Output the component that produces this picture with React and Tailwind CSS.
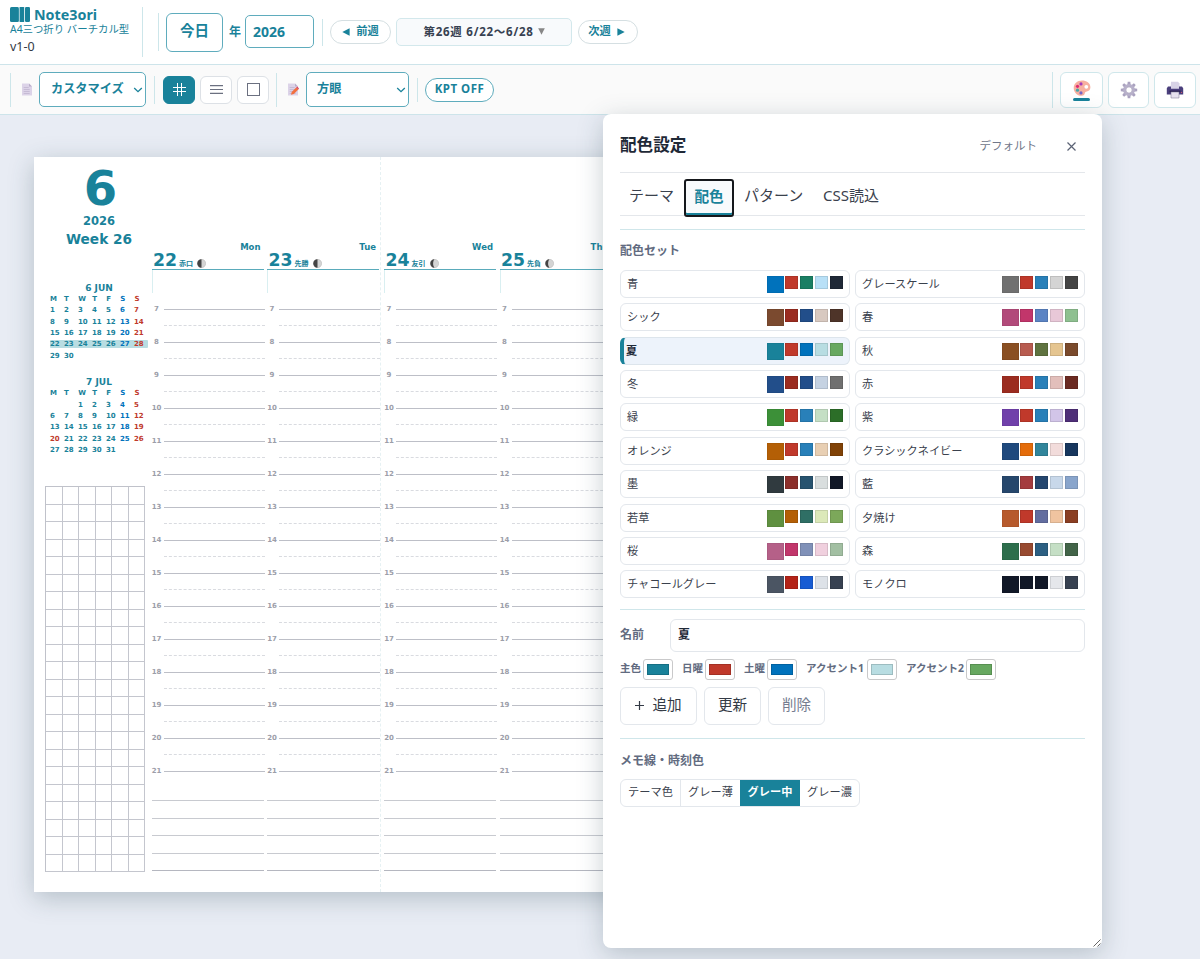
import React from "react";

const SETS = [
  ["青", "#0072bc", "#c0392b", "#1a7f64", "#b8e0f7", "#1f2937"],
  ["グレースケール", "#707070", "#c0392b", "#2980b9", "#d4d4d4", "#444444"],
  ["シック", "#7b4a2f", "#9b2c20", "#224e8a", "#d8c9c0", "#4e3429"],
  ["春", "#b24a7a", "#c2366b", "#5b84c4", "#e8c8d8", "#8ec090"],
  ["夏", "#19829a", "#c0392b", "#0072bc", "#b8dde2", "#67a860"],
  ["秋", "#8a4f22", "#b85c50", "#5f7340", "#e5c590", "#7a4a2c"],
  ["冬", "#224e8a", "#9b2c20", "#224e8a", "#c5d2e2", "#707070"],
  ["赤", "#9b2c20", "#c0392b", "#2980b9", "#e2bfbb", "#6b2a22"],
  ["緑", "#3c9038", "#c0392b", "#2980b9", "#c5dfc5", "#2c6e28"],
  ["紫", "#7040aa", "#c0392b", "#2980b9", "#d2c5e8", "#4e2e78"],
  ["オレンジ", "#b45f06", "#c0392b", "#2980b9", "#e8cfb3", "#804206"],
  ["クラシックネイビー", "#1f497d", "#e46c0a", "#31859b", "#f2dcdb", "#17365d"],
  ["墨", "#303a3f", "#8c2f2b", "#27536f", "#d9dede", "#111827"],
  ["藍", "#26476c", "#a43b3e", "#24466e", "#c8d8ea", "#89a5cc"],
  ["若草", "#5f9040", "#b45f06", "#2f6f65", "#dce9b9", "#7ca85a"],
  ["夕焼け", "#b75a2c", "#c0392b", "#626da0", "#f0c4a0", "#8a3e22"],
  ["桜", "#b56088", "#c2366b", "#8091b8", "#f0d0de", "#a2bfa2"],
  ["森", "#2d6e4c", "#984a30", "#2c5f82", "#c5dfc5", "#426448"],
  ["チャコールグレー", "#4b5563", "#b42318", "#175cd3", "#dde2e8", "#374151"],
  ["モノクロ", "#111827", "#111827", "#111827", "#e5e7eb", "#374151"],
];

const HOURS = [7, 8, 9, 10, 11, 12, 13, 14, 15, 16, 17, 18, 19, 20, 21];

function Divider({ className }) {
  return <div className={"w-px shrink-0 bg-[#cde6ea] " + className} />;
}

function Chevron({ className }) {
  return (
    <svg className={className} width="10" height="6" viewBox="0 0 10 6" fill="none" stroke="#19829a" strokeWidth="1.3">
      <path d="M1.2 1 5 4.7 8.8 1" />
    </svg>
  );
}

function PageIcon({ pencil }) {
  return (
    <svg width="12" height="13" viewBox="0 0 12 13">
      <path d="M1 .5h7L11 3.500v9H1z" fill="#dcd3e8" />
      <path d="M8 .5 11 3.500H8z" fill="#b9adc9" />
      <path d="M2.700 4.500h5M2.700 6.500h6M2.700 8.500h6M2.700 10.500h6" stroke="#c0b5cf" strokeWidth=".8" />
      {pencil && (
        <g>
          <path d="m4 11.700.7-2.800L9.200 4.500l2.100 2.100-4.500 4.400z" fill="#f2703f" />
          <path d="m9.200 4.500 1.100-.9 1.700 1.800-.7 1.200z" fill="#d9415f" />
        </g>
      )}
    </svg>
  );
}

function Header() {
  return (
    <header className="flex h-[65px] items-center border-b border-[#cde4ea] bg-white">
      <div className="ml-2.5 flex h-[50px] w-[133px] flex-col border-r border-[#cde6ea]">
        <div className="flex h-[15px] items-center">
          <svg width="20" height="15" viewBox="0 0 20 15" fill="#19829a">
            <rect x="0" y="0" width="9" height="15" rx="1.5" />
            <rect x="9.6" y="0" width="4.6" height="15" rx=".6" />
            <rect x="15" y="0" width="5" height="15" rx="1.2" />
            <path d="M8.900 0v15" stroke="#7fc0cc" strokeWidth=".4" />
          </svg>
          <span className="ml-[4px] text-[14.300px] leading-[13px] font-bold text-[#19829a]">Note3ori</span>
        </div>
        <div className="h-[15px] text-[10.400px] leading-[15px] whitespace-nowrap text-[#19829a]">A4三つ折り バーチカル型</div>
        <div className="mt-0.5 text-[12.500px] leading-[16px] text-[#333a45]">v1-0</div>
      </div>
      <Divider className="ml-[15px] h-[38px]" />
      <div className="ml-[7px] flex h-[39px] w-[57px] items-center justify-center rounded-md border border-[#5facbd] pb-[2px] text-[14.500px] font-bold text-[#19829a]">今日</div>
      <div className="ml-[6px] w-3 text-[12px] font-bold text-[#19829a]">年</div>
      <div className="-mt-px ml-1 flex h-[33px] w-[69px] items-center rounded-[5px] border border-[#5facbd] pl-[7px] text-[14px] font-bold text-[#19829a]">2026</div>
      <Divider className="ml-2 h-[27px]" />
      <div className="ml-[7px] flex h-6 w-[61px] items-center justify-center gap-[6px] rounded-full border border-[#d5dfe2] pb-px text-[11.300px] font-bold text-[#19829a]">
        <svg width="8" height="8" viewBox="0 0 8 8"><path d="M7.600.2v7.600L.3 4z" fill="#19829a" /></svg>
        前週
      </div>
      <div className="ml-[5px] flex h-7 w-[176px] items-center justify-center gap-1 rounded-[5px] border border-[#d3e8ec] bg-[#f8fafc] pb-px text-[11.500px] font-bold tracking-[0.750px] whitespace-nowrap text-[#374151]">
        第26週 6/22〜6/28
        <svg width="7" height="7" viewBox="0 0 7 7"><path d="M.2.3h6.600L3.500 6.800z" fill="#878787" /></svg>
      </div>
      <div className="ml-1.5 flex h-6 w-[60px] items-center justify-center gap-[6px] rounded-full border border-[#d5dfe2] pr-[3px] pb-px text-[11.300px] font-bold text-[#19829a]">
        次週
        <svg width="8" height="8" viewBox="0 0 8 8"><path d="M.4.2v7.600L7.700 4z" fill="#19829a" /></svg>
      </div>
    </header>
  );
}

function PaletteIcon() {
  return (
    <svg width="18" height="17" viewBox="0 0 18 17">
      <path fillRule="evenodd" d="M9 .5C4 .5.7 3.800.7 8s3.400 7.800 7.700 7.800c2.600 0 3.200-1.500 3.400-2.600.3-1.200 1-1.500 2-1.700 2-.3 3.600-1.800 3.600-4.300C17.400 2.900 13.400.5 9 .5zM13.300 4.900a1.900 1.900 0 1 1 0 3.800 1.900 1.900 0 1 1 0-3.800z" fill="#f7b0a0" />
      <circle cx="8" cy="3.900" r="1.600" fill="#a33bc0" />
      <circle cx="4.500" cy="6.300" r="1.600" fill="#df2c72" />
      <circle cx="4.500" cy="10.200" r="1.600" fill="#4aa6a8" />
      <circle cx="8" cy="12.900" r="1.600" fill="#7565c9" />
    </svg>
  );
}

function GearIcon() {
  return (
    <svg width="18" height="18" viewBox="0 0 18 18">
      <g fill="#aaa2bf">
        {[0, 45, 90, 135, 180, 225, 270, 315].map((a) => (
          <path key={a} d="M7.300 4 7.700.8h2.600l.4 3.200z" transform={`rotate(${a} 9 9)`} />
        ))}
      </g>
      <circle cx="9" cy="9" r="4.600" fill="none" stroke="#b7b0ca" strokeWidth="2.600" />
      <circle cx="9" cy="9" r="3.200" fill="none" stroke="#9b92b0" strokeWidth=".7" />
    </svg>
  );
}

function PrinterIcon() {
  return (
    <svg width="18" height="18" viewBox="0 0 18 18">
      <path d="M5 .8h7L13.500 2.500V8h-9z" fill="#d7d2e6" />
      <path d="M2 5.500h3v2.300h8V5.500h3l1.200 1.800v6.200h-16.400V7.300z" fill="#4a3f7c" />
      <path d="M3.500 9.500h11v1.800h-11z" fill="#2b2354" />
      <path d="M5 11h8v6H5z" fill="#e6e2ef" stroke="#77708f" strokeWidth=".5" />
      <circle cx="15.500" cy="11.500" r=".6" fill="#e3566c" />
    </svg>
  );
}

function Toolbar() {
  const tool = "flex h-[28px] w-8 items-center justify-center rounded-md border ";
  const right = "flex h-9 items-center justify-center rounded-md border border-[#cfe7eb] bg-white ";
  return (
    <div className="flex h-[50px] items-center border-b border-[#cde4ea] bg-[#fafafa]">
      <Divider className="ml-2.5 h-[34px]" />
      <div className="ml-[10px]"><PageIcon /></div>
      <div className="ml-[6px] flex h-[35px] w-[107px] items-center rounded-[5px] border border-[#5facbd] bg-white pl-[11px] pb-px text-[12.200px] font-bold whitespace-nowrap text-[#19829a]">
        <span className="w-[82px]">カスタマイズ</span>
        <Chevron className="mt-[2px] shrink-0" />
      </div>
      <Divider className="ml-2 h-7" />
      <div className={tool + "ml-[8px] border-[#19829a] bg-[#19829a]"}>
        <svg width="13" height="13" viewBox="0 0 13 13" stroke="#fff" strokeWidth="1"><path d="M4.500 0v13M8.500 0v13M0 4.500h13M0 8.500h13" /></svg>
      </div>
      <div className={tool + "ml-[5px] border-[#dde1e6] bg-white"}>
        <svg width="13" height="9" viewBox="0 0 13 9" stroke="#6b7080" strokeWidth="1.200"><path d="M0 .6h13M0 4.500h13M0 8.400h13" /></svg>
      </div>
      <div className={tool + "ml-[5px] border-[#dde1e6] bg-white"}>
        <div className="size-[13px] border-[1.500px] border-[#6b7080]" />
      </div>
      <Divider className="ml-[7px] h-[34px]" />
      <div className="ml-2.5"><PageIcon pencil /></div>
      <div className="ml-[7px] flex h-[35px] w-[103px] items-center rounded-[5px] border border-[#5facbd] bg-white pl-2.5 pb-px text-[12.200px] font-bold text-[#19829a]">
        <span className="w-[79px]">方眼</span>
        <Chevron className="mt-[2px] shrink-0" />
      </div>
      <Divider className="ml-2 h-6" />
      <div className="ml-[7px] flex h-6 w-[69px] items-center justify-center rounded-full border border-[#5facbd] bg-white pb-[2px] text-[11.500px] font-bold tracking-[0.500px] text-[#19829a]">KPT OFF</div>
      <Divider className="ml-auto h-9" />
      <div className={right + "ml-[7px] w-[43px] flex-col pt-[2px]"}>
        <PaletteIcon />
        <div className="mt-[1px] h-[3px] w-[17px] rounded-full bg-[#19829a]" />
      </div>
      <div className={right + "ml-[5px] w-[41px]"}><GearIcon /></div>
      <div className={right + "mr-[4px] ml-[5px] w-[42px]"}><PrinterIcon /></div>
    </div>
  );
}

function MiniMonth({ title, start, days, holiday, current, className }) {
  const rows = [];
  for (let d = 1 - start; d <= days; d += 7) rows.push([0, 1, 2, 3, 4, 5, 6].map((i) => d + i));
  const tone = (i, red) => (i === 6 || red ? "text-[#c0392b]" : i === 5 ? "text-[#0072bc]" : "text-[#19829a]");
  return (
    <div className={"w-[106px] font-['DejaVu_Sans'] text-[7px] font-bold " + className}>
      <div className="pr-px text-center text-[9px] leading-[12px] text-[#19829a]">{title}</div>
      <div className="grid h-[11.300px] grid-cols-7 items-center pl-[3.500px] pr-1">
        {"MTWTFSS".split("").map((c, i) => <span key={i} className={tone(i)}>{c}</span>)}
      </div>
      {rows.map((r) => (
        <div key={r[0]} className="flex h-[11.300px] items-center pl-[3px] pr-[4.500px]">
          <div className={"grid h-2 w-full grid-cols-7 items-center pl-[.5px] leading-2 " + (r[0] === current ? "rounded-[1px] bg-[#b8dde2]" : "")}>
            {r.map((d, i) => <span key={i} className={tone(i, d === holiday)}>{d > 0 && d <= days ? d : ""}</span>)}
          </div>
        </div>
      ))}
    </div>
  );
}

function Moon({ lit }) {
  return (
    <svg width="9" height="9" viewBox="0 0 9 9">
      <circle cx="4.500" cy="4.500" r="4.200" fill="#d4d4d4" stroke="#aaa" strokeWidth=".4" />
      <path d={lit ? "M4.500.3a4.200 4.200 0 0 0 0 8.400C2.700 7 2.700 2 4.500.3z" : "M4.500.3a4.200 4.200 0 0 0 0 8.400z"} fill="#444" />
    </svg>
  );
}

function Day({ num, name, rokuyo, lit, className }) {
  return (
    <div className={"w-[112px] shrink-0 " + className}>
      <div className="flex h-[112.500px] flex-col justify-end border-b border-[#5aabbb] text-[#19829a]">
        <div className="pr-[3px] text-right font-['DejaVu_Sans'] text-[8.500px] leading-[10px] font-bold">{name}</div>
        <div className="flex h-[17px] items-center pl-[1.500px]">
          <span className="font-['DejaVu_Sans'] text-[17.300px] leading-[17px] font-bold">{num}</span>
          <span className="mt-[7px] ml-[2px] text-[7px] leading-[8px] font-bold">{rokuyo}</span>
          <span className="mt-[6px] ml-[4px]"><Moon lit={lit} /></span>
        </div>
      </div>
      <div className="h-[23px] border-l border-[#d9eff1]" />
      <div className="w-[113px]">
        {HOURS.map((h) => (
          <div key={h} className="flex h-[33px]">
            <div className="flex h-[33px] w-[10px] items-center justify-center font-['DejaVu_Sans'] text-[7px] font-bold text-[#9c9ea9]">{h}</div>
            <div className="ml-[2px] flex-1">
              <div className="h-[17px] border-b border-[#bdbfc7]" />
              {h < 21 && <div className="h-[16.500px] border-b border-dashed border-[#d9dbe0]" />}
            </div>
          </div>
        ))}
      </div>
      <div className="mt-[-4px]">
        {[0, 1, 2, 3, 4].map((i) => (
          <div key={i} className={"h-[17.500px] border-b " + (i === 4 ? "border-[#b5b7c0]" : "border-[#c8cad0]")} />
        ))}
      </div>
    </div>
  );
}

function Planner() {
  return (
    <main className="h-[844px] overflow-hidden bg-[#e8ecf4] pt-[42px] pl-[34px]">
      <div className="flex h-[735px] w-[1040px] bg-white shadow-[0_6px_24px_rgba(45,75,85,0.28)]">
        <div className="w-[117.500px] shrink-0 text-[#19829a]">
          <div className="ml-[12px] w-[106px] text-center font-['DejaVu_Sans'] font-bold">
            <div className="h-[55px] pt-[7px] pl-[3px] text-[48px] leading-[49px]">6</div>
            <div className="pt-px text-[11.500px] leading-[16px]">2026</div>
            <div className="mt-px text-[13.700px] leading-[18px]">Week 26</div>
          </div>
          <MiniMonth className="mt-[33.500px] ml-[12.500px]" title="6 JUN" start={0} days={30} current={22} />
          <MiniMonth className="mt-[14.500px] ml-[12.500px]" title="7 JUL" start={2} days={31} holiday={20} />
          <div className="mt-[30.500px] ml-[11px] grid h-[386px] w-[100px] grid-cols-6 border-t border-l border-[#c0c2ca]">
            {Array.from({ length: 132 }, (_, i) => <div key={i} className="border-r border-b border-[#c4c6ce]" />)}
          </div>
        </div>
        <Day num="22" name="Mon" rokuyo="赤口" />
        <Day className="ml-[3.500px]" num="23" name="Tue" rokuyo="先勝" />
        <div className="ml-px flex border-l border-dashed border-[#e6f1f3] pl-[3px]">
          <Day num="24" name="Wed" rokuyo="友引" lit />
          <Day className="ml-[3.500px]" num="25" name="Thu" rokuyo="先負" lit />
        </div>
      </div>
    </main>
  );
}

function SetCard({ set, active }) {
  const [name, main, ...rest] = set;
  return (
    <div className={"flex h-[28px] items-start justify-between rounded-md border pr-[6px] " + (active ? "border-[#dde5ec] border-l-[#19829a] border-l-4 bg-[#edf3fb] pl-[2px] font-bold text-[#1f2937]" : "border-[#e3e7ec] bg-white pl-1.5 text-[#3a414d]")}>
      <span className="text-[11.200px] leading-[25px]">{name}</span>
      <div className="mt-[5px] flex">
        <div className="size-[17px] border border-black/5" style={{ backgroundColor: main }} />
        <div className="ml-px flex gap-[2px]">
          {rest.map((c, i) => <div key={i} className="size-[13px] border border-black/10" style={{ backgroundColor: c }} />)}
        </div>
      </div>
    </div>
  );
}

function ColorField({ label, color, width }) {
  return (
    <div className={"flex shrink-0 items-center justify-between " + width}>
      <span className="-mt-[2px] text-[10.500px] font-bold whitespace-nowrap text-[#626b80]">{label}</span>
      <div className="flex h-[21px] w-[30px] shrink-0 items-center justify-center rounded-[3px] border border-[#c9c9ca] bg-white">
        <div className="h-[11px] w-[22px] border border-black/15" style={{ backgroundColor: color }} />
      </div>
    </div>
  );
}

function Panel() {
  const button = "flex h-[38px] items-center justify-center rounded-md border border-[#e3e7ec] pb-[3px] text-[14.600px] ";
  return (
    <aside className="absolute top-[114px] left-[603px] flex h-[834px] w-[499px] flex-col rounded-lg bg-white px-[17px] shadow-[0_6px_26px_rgba(45,75,85,0.26)]">
      <div className="flex h-[59px] items-center border-b border-[#e4e7eb] pt-[5px]">
        <h2 className="text-[16.600px] font-bold text-[#1f2937]">配色設定</h2>
        <span className="ml-auto text-[11.500px] text-[#70778a]">デフォルト</span>
        <svg className="mt-px mr-[9px] ml-[30px]" width="9" height="9" viewBox="0 0 9 9" stroke="#5b6274" strokeWidth="1.200"><path d="m.5.5 8 8M8.500.5l-8 8" /></svg>
      </div>
      <nav className="flex h-[43px] items-start border-b border-[#e4e7eb] text-[15px] leading-[44px] whitespace-nowrap text-[#3a414d]">
        <span className="w-[64px] pl-[9px]">テーマ</span>
        <div className="mt-[6px] flex h-[38px] w-[50px] items-center justify-center rounded-[3px] border-2 border-[#15181c] bg-[#f8fafc] pb-[5px] text-[14.600px] font-bold leading-[20px] text-[#19829a] shadow-[inset_0_-2px_0_#19829a]">配色</div>
        <span className="ml-[10px] w-[79px]">パターン</span>
        <span>CSS読込</span>
      </nav>
      <section className="mt-[13px] border-t border-[#cfe6ea]">
        <h3 className="mt-[12px] h-[28px] text-[12px] leading-[18px] font-bold text-[#626b80]">配色セット</h3>
        <div className="grid grid-cols-2 gap-x-[5px] gap-y-[5.370px]">
          {SETS.map((s) => <SetCard key={s[0]} set={s} active={s[0] === "夏"} />)}
        </div>
      </section>
      <section className="mt-[11px] border-t border-[#cfe6ea]">
        <div className="mt-[9px] flex h-[33px] items-center">
          <span className="w-[50px] pb-[2px] text-[12px] font-bold text-[#626b80]">名前</span>
          <div className="flex h-[33px] flex-1 items-center rounded-md border border-[#e3e7ec] pb-[2px] pl-[7px] text-[12px] font-bold text-[#1f2937]">夏</div>
        </div>
        <div className="mt-[7px] flex h-[21px] gap-[9px]">
          <ColorField label="主色" color="#19829a" width="w-[53px]" />
          <ColorField label="日曜" color="#c0392b" width="w-[53px]" />
          <ColorField label="土曜" color="#0072bc" width="w-[53px]" />
          <ColorField label="アクセント1" color="#b8dde2" width="w-[91px]" />
          <ColorField label="アクセント2" color="#67a860" width="w-[90px]" />
        </div>
        <div className="mt-[7px] flex gap-[7px]">
          <div className={button + "w-[77px] gap-[8px] text-[#333a45]"}>
            <svg className="mt-[2px]" width="9" height="9" viewBox="0 0 9 9" stroke="#333a45" strokeWidth="1.200"><path d="M4.500 0v9M0 4.500h9" /></svg>
            追加
          </div>
          <div className={button + "w-[57px] text-[#333a45]"}>更新</div>
          <div className={button + "w-[57px] text-[#757c8f]"}>削除</div>
        </div>
      </section>
      <section className="mt-[13px] border-t border-[#cfe6ea]">
        <h3 className="mt-[13px] text-[12px] leading-[18px] font-bold text-[#626b80]">メモ線・時刻色</h3>
        <div className="mt-[9px] flex h-[28px] w-[240px] overflow-hidden rounded-md border border-[#e3e7ec] text-center text-[11.200px] leading-[24px] text-[#3a414d]">
          <span className="w-[60px] border-r border-[#e3e7ec]">テーマ色</span>
          <span className="w-[59px]">グレー薄</span>
          <span className="w-[60px] bg-[#19829a] font-bold text-white">グレー中</span>
          <span className="w-[59px]">グレー濃</span>
        </div>
      </section>
      <svg className="mt-auto -mr-[16px] mb-px self-end" width="8" height="8" viewBox="0 0 8 8" stroke="#555" strokeWidth=".9"><path d="M.5 7.500l7-7M4.500 7.500l3-3" /></svg>
    </aside>
  );
}

export default function App() {
  return (
    <div className="relative h-[959px] w-[1200px] overflow-hidden bg-[#e8ecf4] font-['Noto_Sans','Noto_Sans_CJK_JP',sans-serif]" lang="ja">
      <Header />
      <Toolbar />
      <Planner />
      <Panel />
    </div>
  );
}
